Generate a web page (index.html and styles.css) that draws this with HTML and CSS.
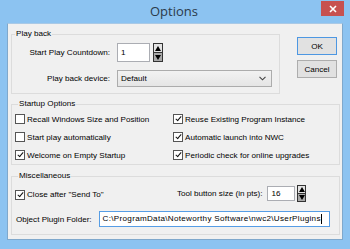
FILE: index.html
```html
<!DOCTYPE html>
<html lang="en">
<head>
    <meta charset="UTF-8">
    <link rel="stylesheet" href="styles.css">
    <title>Options</title>
</head>
<body>

<div class="window">
    <div class="titlebar">
        <div class="title">Options</div>
        <div class="close-btn">
            <svg width="8" height="8" viewBox="0 0 8 8"><path d="M1 1L7 7M7 1L1 7" stroke="#fff" stroke-width="1.6"/></svg>
        </div>
    </div>

    <div class="client">
        <div class="top-row">
            <fieldset class="group group-playback">
                <legend>Play back</legend>
                <div class="form-grid">
                    <label class="field-label">Start Play Countdown:</label>
                    <div class="spin">
                        <input type="text" class="text-input spin-input" value="1">
                        <div class="spin-buttons">
                            <div class="spin-up"></div>
                            <div class="spin-down"></div>
                        </div>
                    </div>
                    <label class="field-label">Play back device:</label>
                    <div class="select">
                        <span>Default</span>
                        <svg width="7" height="5" viewBox="0 0 7 5"><path d="M0.5 0.8L3.5 3.8L6.5 0.8" fill="none" stroke="#444" stroke-width="1.1"/></svg>
                    </div>
                </div>
            </fieldset>

            <div class="buttons">
                <div class="btn btn-default">OK</div>
                <div class="btn">Cancel</div>
            </div>
        </div>

        <fieldset class="group group-startup">
            <legend>Startup Options</legend>
            <div class="check-grid">
                <label class="check"><span class="box"></span>Recall Windows Size and Position</label>
                <label class="check"><span class="box checked"></span>Reuse Existing Program Instance</label>
                <label class="check"><span class="box"></span>Start play automatically</label>
                <label class="check"><span class="box checked"></span>Automatic launch into NWC</label>
                <label class="check"><span class="box checked"></span>Welcome on Empty Startup</label>
                <label class="check"><span class="box checked"></span>Periodic check for online upgrades</label>
            </div>
        </fieldset>

        <fieldset class="group group-misc">
            <legend>Miscellaneous</legend>
            <div class="misc-row">
                <label class="check check-send"><span class="box checked"></span>Close after "Send To"</label>
                <label class="field-label tool-label">Tool button size (in pts):</label>
                <div class="spin">
                    <input type="text" class="text-input spin-input small" value="16">
                    <div class="spin-buttons small">
                        <div class="spin-up"></div>
                        <div class="spin-down"></div>
                    </div>
                </div>
            </div>
            <div class="misc-row folder-row">
                <label class="field-label">Object Plugin Folder:</label>
                <div class="text-input path-input">C:\ProgramData\Noteworthy Software\nwc2\UserPlugins<span class="caret"></span></div>
            </div>
        </fieldset>
    </div>
</div>

</body>
</html>
```

FILE: styles.css
```css
html, body {
    margin: 0;
    padding: 0;
}

body {
    width: 350px;
    height: 249px;
    overflow: hidden;
    background-color: #8cc3f1;
    font-family: "Liberation Sans", Arial, sans-serif;
    font-size: 8.1px;
    color: #000;
}

.window {
    width: 350px;
    height: 249px;
}

.titlebar {
    height: 23px;
    display: flex;
    align-items: center;
    justify-content: center;
    position: relative;
}

.title {
    font-family: "Open Sans", sans-serif;
    font-size: 13px;
    color: #2b3a4a;
    margin-left: -2px;
    margin-top: -1px;
}

.close-btn {
    position: absolute;
    top: 1px;
    right: 6px;
    width: 23px;
    height: 15px;
    background-color: #c75150;
    display: flex;
    align-items: center;
    justify-content: center;
}

.client {
    margin: 0 7px;
    height: 217px;
    box-sizing: border-box;
    background-color: #f0f0f0;
    border: 1px solid #7fa8cc;
    border-top-color: #a9c9e6;
    padding: 4px 2px 0 3px;
}

.top-row {
    display: flex;
    align-items: flex-start;
}

.group {
    margin: 0;
    border: 1px solid #dcdcdc;
    padding: 0;
    box-sizing: border-box;
}

.group legend {
    padding: 0 1px;
    margin-left: 3px;
    line-height: 12px;
    color: #000;
}

.group-playback {
    width: 269px;
    padding: 3px 0 6px 0;
}

.form-grid {
    display: grid;
    grid-template-columns: 98px 1fr;
    column-gap: 7px;
    row-gap: 8px;
    align-items: center;
}

.field-label {
    text-align: right;
    white-space: nowrap;
}

.spin {
    display: flex;
    align-items: center;
    gap: 3px;
}

.text-input {
    box-sizing: border-box;
    background-color: #fff;
    border: 1px solid #abadb3;
    font-family: inherit;
    font-size: inherit;
    color: #000;
    padding: 0 3px;
    margin: 0;
    outline: none;
}

.spin-input {
    width: 33px;
    height: 19px;
}

.spin-input.small {
    width: 28px;
    height: 15px;
}

.spin-buttons {
    width: 10px;
    height: 19px;
    display: flex;
    flex-direction: column;
    border: 1px solid #333;
    box-sizing: border-box;
}

.spin-buttons.small {
    width: 9px;
    height: 17px;
}

.spin-up,
.spin-down {
    flex: 1;
    display: flex;
    align-items: center;
    justify-content: center;
}

.spin-up {
    background-color: #e3e3e3;
    border-bottom: 1px solid #333;
}

.spin-down {
    background-color: #a9a9a9;
}

.spin-up::after {
    content: "";
    border-left: 3px solid transparent;
    border-right: 3px solid transparent;
    border-bottom: 5px solid #000;
}

.spin-down::after {
    content: "";
    border-left: 3px solid transparent;
    border-right: 3px solid transparent;
    border-top: 5px solid #000;
}

.select {
    width: 155px;
    height: 17px;
    box-sizing: border-box;
    border: 1px solid #acacac;
    background: linear-gradient(#f2f2f2, #e5e5e5);
    display: flex;
    align-items: center;
    justify-content: space-between;
    padding: 0 5px 0 3px;
}

.buttons {
    margin-left: 17px;
    margin-top: 9px;
    display: flex;
    flex-direction: column;
    gap: 5px;
}

.btn {
    width: 40px;
    height: 18px;
    box-sizing: border-box;
    border: 1px solid #adadad;
    background-color: #e1e1e1;
    display: flex;
    align-items: center;
    justify-content: center;
}

.btn-default {
    border-color: #4d97e2;
}

.group-startup {
    margin-top: 4px;
    padding: 0 0 0 3px;
}

.check-grid {
    display: grid;
    grid-template-columns: 158px 1fr;
    grid-auto-rows: 18px;
    align-items: center;
}

.check {
    display: flex;
    align-items: center;
    gap: 2px;
    white-space: nowrap;
}

.box {
    width: 10px;
    height: 10px;
    box-sizing: border-box;
    border: 1px solid #555;
    background-color: #fff;
    display: flex;
    align-items: center;
    justify-content: center;
}

.box.checked::after {
    content: "";
    width: 2px;
    height: 5px;
    border-right: 1.5px solid #111;
    border-bottom: 1.5px solid #111;
    transform: rotate(40deg);
    margin-top: -2px;
}

.group-misc {
    margin-top: 5px;
    padding: 3px 0 7px 3px;
}

.misc-row {
    display: flex;
    align-items: center;
}

.check-send {
    width: 162px;
    margin-top: 2px;
}

.tool-label {
    margin-right: 5px;
}

.misc-row .spin {
    gap: 2px;
}

.folder-row {
    margin-top: 9px;
    padding-left: 1px;
}

.path-input {
    margin-left: 7px;
    width: 231px;
    height: 16px;
    line-height: 14px;
    border-color: #569de5;
    white-space: nowrap;
    letter-spacing: 0.3px;
}

.caret {
    display: inline-block;
    width: 1px;
    height: 10px;
    background-color: #000;
    vertical-align: middle;
}
```
